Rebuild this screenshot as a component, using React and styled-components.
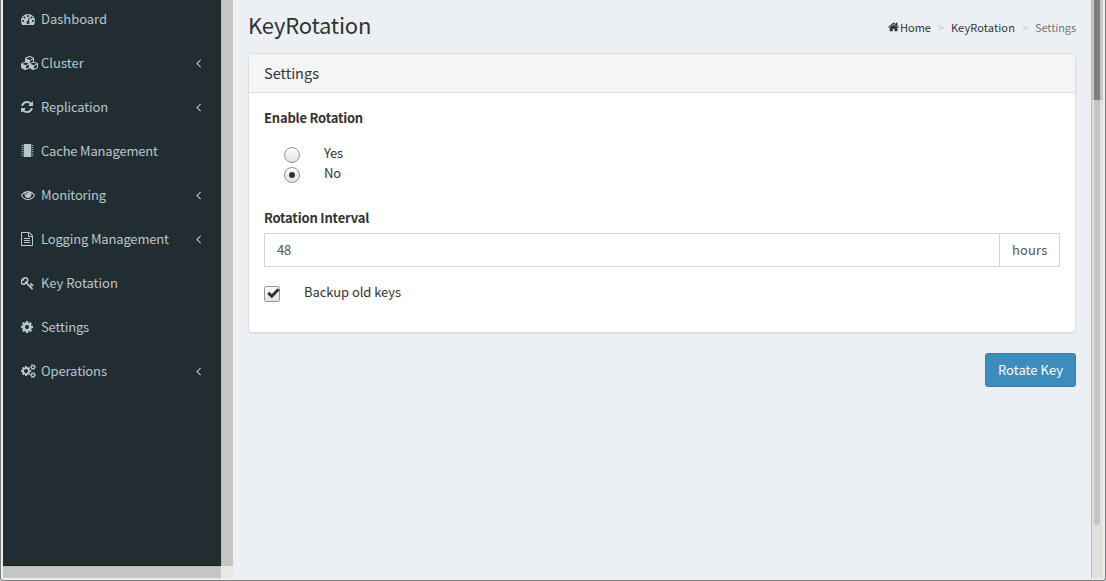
import React from "react";
import styled, { createGlobalStyle } from "styled-components";

const Global = createGlobalStyle`
  *, *::before, *::after { box-sizing: border-box; }
  html, body { margin: 0; height: 100%; overflow: hidden; }
  body {
    font-family: "Noto Sans CJK SC", "Open Sans", sans-serif;
    font-size: 13px;
    line-height: 20px;
    color: #333;
    background: #ecf0f5;
  }
`;

const Window = styled.div`
  display: flex;
  width: 1106px;
  height: 581px;
  overflow: hidden;
  border: solid #7c7c7c;
  border-width: 0 1px 1px;
  border-radius: 0 0 3px 3px;
  background: #f0eeec;
  padding: 0 2px 2px;
`;

const SidebarPane = styled.div`
  width: 230px;
  display: grid;
  grid-template-columns: 218px 12px;
  grid-template-rows: 566px 12px;
`;

const Sidebar = styled.nav`
  background: #222d32;
  padding-top: 3px;
  border-bottom: 1px solid #1a2226;
  overflow: hidden;
`;

const Track = styled.div`
  background: #c4c6c5;
  border-left: ${(p) => (p.$side === "right" ? "1px solid #b9bbba" : "0")};
  border-top: ${(p) => (p.$side === "bottom" ? "1px solid #b9b9b6" : "0")};
`;

const Corner = styled.div`
  background: #e8e8e6;
`;

const NavItem = styled.a`
  display: flex;
  align-items: center;
  height: 32px;
  margin-bottom: 12px;
  padding: 0 18px;
  color: #b8c7ce;
  font-size: 13px;
  letter-spacing: ${(p) => p.$track}px;
`;

const IconSlot = styled.span`
  display: flex;
  width: 20px;
  height: 14px;
  overflow: visible;
  flex: none;
`;

const NavText = styled.span`
  flex: 1;
  white-space: nowrap;
`;

const Chevron = styled.span`
  display: flex;
  margin-right: 2px;
`;

const Content = styled.main`
  width: 858px;
  background: #ecf0f5;
  padding: 9px 15px 0;
`;

const Header = styled.header`
  display: flex;
  justify-content: space-between;
  align-items: center;
  height: 30px;
`;

const Title = styled.h1`
  margin: 0;
  font-size: 22px;
  font-weight: 400;
  line-height: 30px;
  letter-spacing: -0.2px;
`;

const Breadcrumb = styled.div`
  display: flex;
  align-items: center;
  font-size: 11px;
  line-height: 16px;
  color: #444;
  padding-top: 5px;
`;

const Crumb = styled.span`
  display: flex;
  align-items: center;
  gap: 1px;
  letter-spacing: ${(p) => p.$track}px;
  color: ${(p) => (p.$active ? "#777" : "#333")};
`;

const Separator = styled.span`
  width: 20px;
  text-align: center;
  color: #ccc;
`;

const Panel = styled.section`
  margin-top: 14px;
  height: 280px;
  border: 1px solid #ddd;
  border-radius: 4px;
  background: #fff;
  box-shadow: 0 1px 1px rgba(0, 0, 0, 0.05);
  overflow: hidden;
`;

const PanelHeading = styled.div`
  height: 39px;
  padding: 0 15px;
  border-bottom: 1px solid #ddd;
  background: #f5f5f5;
  font-size: 14.5px;
  line-height: 37px;
  letter-spacing: 0;
`;

const PanelBody = styled.div`
  padding: 15px;
`;

const Label = styled.div`
  font-weight: 700;
  letter-spacing: ${(p) => p.$track}px;
  height: 20px;
`;

const RadioGroup = styled.div`
  padding: 15px 20px 25px;
`;

const Choice = styled.label`
  display: flex;
  height: 20px;
  gap: 24px;
  letter-spacing: ${(p) => p.$track || 0}px;
`;

const Mark = styled.svg`
  width: 16px;
  height: 16px;
  margin-top: 4px;
  flex: none;
`;

const InputGroup = styled.div`
  display: flex;
  height: 34px;
  margin: 5px 0 15px;
  border: 1px solid #d2d6de;
  color: #555;
  line-height: 32px;
`;

const Field = styled.div`
  flex: 1;
  padding-left: 12px;
  letter-spacing: -0.2px;
`;

const Addon = styled.div`
  width: 60px;
  border-left: 1px solid #d2d6de;
  padding-left: 12px;
  letter-spacing: 0.15px;
`;

const Actions = styled.div`
  display: flex;
  justify-content: flex-end;
  margin-top: 20px;
`;

const Button = styled.button`
  width: 91px;
  height: 34px;
  padding: 0;
  border: 1px solid #367fa9;
  border-radius: 3px;
  background: #3c8dbc;
  color: #fff;
  font: inherit;
  letter-spacing: 0.05px;
  white-space: nowrap;
`;

const PageScroll = styled.div`
  width: 12px;
  border-left: 1px solid #b9bbb9;
  background: linear-gradient(#c4c6c5 100px, #e0e0de 100px);
  padding-left: 2px;
`;

const Thumb = styled.div`
  width: 6px;
  height: 525px;
  border-radius: 0 0 3px 3px;
  background: linear-gradient(#7b7f7f 100px, #c4c6c5 100px);
`;

const PATHS = {
  angle: ["576 0 640 1792", "M1203 544q0 13-10 23l-393 393 393 393q10 10 10 23t-10 23l-50 50q-10 10-23 10t-23-10l-466-466q-10-10-10-23t10-23l466-466q10-10 23-10t23 10l50 50q10 10 10 23z"],
  cog: ["128 0 1536 1792", "M1152 896q0-106-75-181t-181-75-181 75-75 181 75 181 181 75 181-75 75-181zm512-109v222q0 12-8 23t-20 13l-185 28q-19 54-39 91 35 50 107 138 10 12 10 25t-9 23q-27 37-99 108t-94 71q-12 0-26-9l-138-108q-44 23-91 38-16 136-29 186-7 28-36 28h-222q-14 0-24.5-8.5t-11.5-21.5l-28-184q-49-16-90-37l-141 107q-10 9-25 9-14 0-25-11-126-114-165-168-7-10-7-23 0-12 8-23 15-21 51-66.5t54-70.5q-27-50-41-99l-183-27q-13-2-21-12.5t-8-23.5v-222q0-12 8-23t19-13l186-28q14-46 39-92-40-57-107-138-10-12-10-24 0-10 9-23 26-36 98.5-107.5t94.5-71.5q13 0 26 10l138 107q44-23 91-38 16-136 29-186 7-28 36-28h222q14 0 24.5 8.5t11.5 21.5l28 184q49 16 90 37l142-107q9-9 24-9 13 0 25 10 129 119 165 170 7 8 7 22 0 12-8 23-15 21-51 66.5t-54 70.5q26 50 41 98l183 28q13 2 21 12.5t8 23.5z"],
  home: ["64 0 1664 1792", "M1472 992v480q0 26-19 45t-45 19h-384v-384h-256v384h-384q-26 0-45-19t-19-45v-480q0-1 .5-3t.5-3l575-474 575 474q1 2 1 6zm223-69l-62 74q-8 9-21 11h-3q-13 0-21-7l-692-577-692 577q-12 8-24 7-13-2-21-11l-62-74q-8-10-7-23.5t11-21.5l719-599q32-26 76-26t76 26l244 204v-195q0-14 9-23t23-9h192q14 0 23 9t9 23v408l219 182q10 8 11 21.5t-7 23.5z"],
  refresh: ["128 0 1536 1792", "M1639 1056q0 5-1 7-64 268-268 434.5t-478 166.5q-146 0-282.5-55t-243.5-157l-129 129q-19 19-45 19t-45-19-19-45v-448q0-26 19-45t45-19h448q26 0 45 19t19 45-19 45l-137 137q71 66 161 102t187 36q134 0 250-65t186-179q11-17 53-117 8-23 30-23h192q13 0 22.5 9.5t9.5 22.5zm25-800v448q0 26-19 45t-45 19h-448q-26 0-45-19t-19-45 19-45l138-138q-148-137-349-137-134 0-250 65t-186 179q-11 17-53 117-8 23-30 23h-199q-13 0-22.5-9.5t-9.5-22.5v-7q65-268 270-434.5t480-166.5q146 0 284 55.5t245 156.5l130-129q19-19 45-19t45 19 19 45z"],
  eye: ["0 0 1792 1792", "M1664 960q-152-236-381-353 61 104 61 225 0 185-131.5 316.5t-316.5 131.5-316.5-131.5-131.5-316.5q0-121 61-225-229 117-381 353 133 205 333.5 326.5t434.5 121.5 434.5-121.5 333.5-326.5zm-720-384q0-20-14-34t-34-14q-125 0-214.5 89.5t-89.5 214.5q0 20 14 34t34 14 34-14 14-34q0-86 61-147t147-61q20 0 34-14t14-34zm848 384q0 34-20 69-140 230-376.5 368.5t-499.5 138.5-499.5-139-376.5-368q-20-35-20-69t20-69q140-229 376.5-368t499.5-139 499.5 139 376.5 368q20 35 20 69z"],
  file: ["128 0 1536 1792", "M1596 380q28 28 48 76t20 88v1152q0 40-28 68t-68 28h-1344q-40 0-68-28t-28-68v-1600q0-40 28-68t68-28h896q40 0 88 20t76 48zm-444-244v376h376q-10-29-22-41l-313-313q-12-12-41-22zm384 1528v-1024h-416q-40 0-68-28t-28-68v-416h-768v1536h1280zm-1024-864q0-14 9-23t23-9h704q14 0 23 9t9 23v64q0 14-9 23t-23 9h-704q-14 0-23-9t-9-23v-64zm736 224q14 0 23 9t9 23v64q0 14-9 23t-23 9h-704q-14 0-23-9t-9-23v-64q0-14 9-23t23-9h704zm0 256q14 0 23 9t9 23v64q0 14-9 23t-23 9h-704q-14 0-23-9t-9-23v-64q0-14 9-23t23-9h704z"],
  key: ["64 0 1664 1792", "M832 512q0-80-56-136t-136-56-136 56-56 136q0 42 19 83-41-19-83-19-80 0-136 56t-56 136 56 136 136 56 136-56 56-136q0-42-19-83 41 19 83 19 80 0 136-56t56-136zm851 704q0 17-49 66t-66 49q-9 0-28.5-16t-36.5-33-38.5-40-24.5-26l-96 96 220 220q28 28 28 68 0 42-39 81t-81 39q-40 0-68-28l-671-671q-176 131-365 131-163 0-265.5-102.5t-102.5-265.5q0-160 95-313t248-248 313-95q163 0 265.5 102.5t102.5 265.5q0 189-131 365l355 355 96-96q-3-3-26-24.5t-40-38.5-33-36.5-16-28.5q0-17 49-66t66-49q13 0 23 10 6 6 46 44.5t82 79.5 86.5 86 73 78 28.5 41z"],
  gauge: ["0 0 1792 1792", "M384 1152q0-53-37.5-90.5t-90.5-37.5-90.5 37.5-37.5 90.5 37.5 90.5 90.5 37.5 90.5-37.5 37.5-90.5zm192-448q0-53-37.5-90.5t-90.5-37.5-90.5 37.5-37.5 90.5 37.5 90.5 90.5 37.5 90.5-37.5 37.5-90.5zm428 481l101-382q6-26-7.5-48.5t-38.5-29.5-48 6.5-30 39.5l-101 382q-60 5-107 43.5t-63 98.5q-20 77 20 146t117 89 146-20 89-117q16-60-6-117t-72-91zm660-33q0-53-37.5-90.5t-90.5-37.5-90.5 37.5-37.5 90.5 37.5 90.5 90.5 37.5 90.5-37.5 37.5-90.5zm-640-640q0-53-37.5-90.5t-90.5-37.5-90.5 37.5-37.5 90.5 37.5 90.5 90.5 37.5 90.5-37.5 37.5-90.5zm448 192q0-53-37.5-90.5t-90.5-37.5-90.5 37.5-37.5 90.5 37.5 90.5 90.5 37.5 90.5-37.5 37.5-90.5zm320 448q0 261-141 483-19 29-54 29h-1402q-35 0-54-29-141-221-141-483 0-182 71-348t191-286 286-191 348-71 348 71 286 191 191 286 71 348z"],
  cogs: ["0 0 1920 1792", "M896 896q0-106-75-181t-181-75-181 75-75 181 75 181 181 75 181-75 75-181zm768 512q0-52-38-90t-90-38-90 38-38 90q0 53 37.5 90.5t90.5 37.5 90.5-37.5 37.5-90.5zm0-1024q0-52-38-90t-90-38-90 38-38 90q0 53 37.5 90.5t90.5 37.5 90.5-37.5 37.5-90.5zm-384 421v185q0 10-7 19.5t-16 10.5l-155 24q-11 35-32 76 34 48 90 115 7 11 7 20 0 12-7 19-23 30-82.5 89.5t-78.5 59.5q-11 0-21-7l-115-90q-37 19-77 31-11 108-23 155-7 24-30 24h-186q-11 0-20-7.5t-10-17.5l-23-153q-34-10-75-31l-118 89q-7 7-20 7-11 0-21-8-144-133-144-160 0-9 7-19 10-14 41-53t47-61q-23-44-35-82l-152-24q-10-1-17-9.5t-7-19.5v-185q0-10 7-19.5t16-10.5l155-24q11-35 32-76-34-48-90-115-7-11-7-20 0-12 7-20 22-30 82-89t79-59q11 0 21 7l115 90q34-18 77-32 11-108 23-154 7-24 30-24h186q11 0 20 7.5t10 17.5l23 153q34 10 75 31l118-89q8-7 20-7 11 0 21 8 144 133 144 160 0 8-7 19-12 16-42 54t-45 60q23 48 34 82l152 23q10 2 17 10.5t7 19.5zm640 533v140q0 16-149 31-12 27-30 52 51 113 51 138 0 4-4 7-122 71-124 71-8 0-46-47t-52-68q-20 2-30 2t-30-2q-14 21-52 68t-46 47q-2 0-124-71-4-3-4-7 0-25 51-138-18-25-30-52-149-15-149-31v-140q0-16 149-31 13-29 30-52-51-113-51-138 0-4 4-7 4-2 35-20t59-34 30-16q8 0 46 46.5t52 67.5q20-2 30-2t30 2q51-71 92-112l6-2q4 0 124 70 4 3 4 7 0 25-51 138 17 23 30 52 149 15 149 31zm0-1024v140q0 16-149 31-12 27-30 52 51 113 51 138 0 4-4 7-122 71-124 71-8 0-46-47t-52-68q-20 2-30 2t-30-2q-14 21-52 68t-46 47q-2 0-124-71-4-3-4-7 0-25 51-138-18-25-30-52-149-15-149-31v-140q0-16 149-31 13-29 30-52-51-113-51-138 0-4 4-7 4-2 35-20t59-34 30-16q8 0 46 46.5t52 67.5q20-2 30-2t30 2q51-71 92-112l6-2q4 0 124 70 4 3 4 7 0 25-51 138 17 23 30 52 149 15 149 31z"],
  cubes: ["0 0 2304 1792", "M640 1632l384-192v-314l-384 164v342zm-64-454l404-173-404-173-404 173zm1088 454l384-192v-314l-384 164v342zm-64-454l404-173-404-173-404 173zm-448-293l384-165v-266l-384 164v267zm-64-379l441-189-441-189-441 189zm1088 518v416q0 36-19 67t-52 47l-448 224q-25 14-57 14t-57-14l-448-224q-4-2-7-4-2 2-7 4l-448 224q-25 14-57 14t-57-14l-448-224q-33-16-52-47t-19-67v-416q0-38 21.5-70t56.5-48l434-186v-400q0-38 21.5-70t56.5-48l448-192q23-10 50-10t50 10l448 192q35 16 56.5 48t21.5 70v400l434 186q36 16 57 48t21 70z"],
  chip: ["0 0 1664 1792", "M350 0H1310V1664H350ZM80 128h190v90H80zM80 384h190v90H80zM80 640h190v90H80zM80 896h190v90H80zM80 1152h190v90H80zM80 1408h190v90H80zM1390 128h190v90H1390zM1390 384h190v90H1390zM1390 640h190v90H1390zM1390 896h190v90H1390zM1390 1152h190v90H1390zM1390 1408h190v90H1390z"],
};

function Icon({ name, size = 14 }) {
  const [box, d] = PATHS[name];
  const width = (Number(box.split(" ")[2]) / 1792) * size;
  return (
    <svg width={width} height={size} viewBox={box} fill="currentColor">
      <path d={d} />
    </svg>
  );
}

const NAV = [
  { icon: "gauge", text: "Dashboard", track: -0.02 },
  { icon: "cubes", text: "Cluster", track: 0.03, more: true },
  { icon: "refresh", text: "Replication", track: -0.14, more: true },
  { icon: "chip", text: "Cache Management", track: -0.19 },
  { icon: "eye", text: "Monitoring", track: -0.15, more: true },
  { icon: "file", text: "Logging Management", track: -0.16, more: true },
  { icon: "key", text: "Key Rotation", track: -0.01 },
  { icon: "cog", text: "Settings", track: -0.15 },
  { icon: "cogs", text: "Operations", track: -0.12, more: true },
];

function ControlFill({ id }) {
  return (
    <defs>
      <linearGradient id={id} x1="0" y1="0" x2="0" y2="1">
        <stop offset="0" stopColor="#fcfcfc" />
        <stop offset="1" stopColor="#e2e2e0" />
      </linearGradient>
    </defs>
  );
}

function Radio({ checked, id }) {
  return (
    <Mark viewBox="0 0 16 16">
      <ControlFill id={id} />
      <circle cx="8" cy="8" r="7.5" fill={`url(#${id})`} stroke="#92948f" />
      {checked && <circle cx="8" cy="8" r="3" fill="#2e3436" />}
    </Mark>
  );
}

function Checkbox() {
  return (
    <Mark viewBox="0 0 16 16">
      <ControlFill id="check" />
      <rect x="0.5" y="0.5" width="15" height="15" rx="2" fill="url(#check)" stroke="#92948f" />
      <path d="M4.2 6.8L7.8 10.2L14.6 3.2" fill="none" stroke="#2e3436" strokeWidth="3" />
    </Mark>
  );
}

export default function App() {
  return (
    <>
      <Global />
      <Window>
        <SidebarPane>
          <Sidebar>
            {NAV.map((n) => (
              <NavItem key={n.text} $track={n.track}>
                <IconSlot><Icon name={n.icon} /></IconSlot>
                <NavText>{n.text}</NavText>
                {n.more && <Chevron><Icon name="angle" /></Chevron>}
              </NavItem>
            ))}
          </Sidebar>
          <Track $side="right" />
          <Track $side="bottom" />
          <Corner />
        </SidebarPane>
        <Content>
          <Header>
            <Title>KeyRotation</Title>
            <Breadcrumb>
              <Crumb $track={0}><Icon name="home" size={12} />Home</Crumb>
              <Separator>&gt;</Separator>
              <Crumb $track={0.12}>KeyRotation</Crumb>
              <Separator>&gt;</Separator>
              <Crumb $active $track={-0.08}>Settings</Crumb>
            </Breadcrumb>
          </Header>
          <Panel>
            <PanelHeading>Settings</PanelHeading>
            <PanelBody>
              <Label $track={-0.2}>Enable Rotation</Label>
              <RadioGroup>
                <Choice $track={-0.2}><Radio id="yes" />Yes</Choice>
                <Choice $track={-0.2}><Radio id="no" checked />No</Choice>
              </RadioGroup>
              <Label $track={-0.18}>Rotation Interval</Label>
              <InputGroup>
                <Field>48</Field>
                <Addon>hours</Addon>
              </InputGroup>
              <Choice $track={-0.06}><Checkbox />Backup old keys</Choice>
            </PanelBody>
          </Panel>
          <Actions><Button>Rotate Key</Button></Actions>
        </Content>
        <PageScroll><Thumb /></PageScroll>
      </Window>
    </>
  );
}
